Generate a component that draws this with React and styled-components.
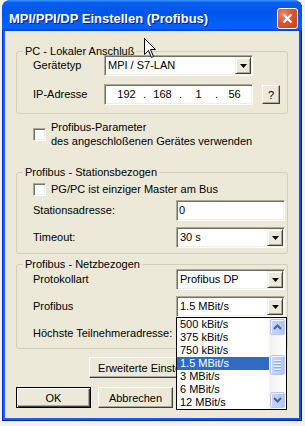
import React from 'react';
import styled, { createGlobalStyle } from 'styled-components';

const Global = createGlobalStyle`
  html, body { margin: 0; padding: 0; background: #f2f2ef; }
  body { font-family: "Liberation Sans", Arial, sans-serif; font-size: 11px; color: #000; }
  #root { width: 305px; height: 426px; overflow: hidden; }
  * { box-sizing: border-box; }
`;

const Screen = styled.div`
  position: relative;
  width: 305px;
  height: 426px;
  padding-left: 2px;
  overflow: hidden;
`;

const Window = styled.div`
  width: 300px;
  height: 421px;
  display: flex;
  flex-direction: column;
  background: linear-gradient(90deg, #0019cf 0, #0b53e6 1px, #1b63f0 2px, #0b53e6 100%);
  border-radius: 8px 8px 0 0;
  overflow: hidden;
  box-shadow: inset -1px -1px 0 #001ea0;
`;

const TitleBar = styled.div`
  height: 31px;
  flex: none;
  display: flex;
  align-items: center;
  padding: 5px 4px 0 7px;
  border-radius: 8px 8px 0 0;
  background: linear-gradient(180deg, #3d95ff 0%, #0a5ff0 8%, #0055ea 40%, #0063fb 86%, #005bf5 93%, #0049db 97%, #003dd7 100%);
`;

const Title = styled.div`
  flex: 1;
  color: #fff;
  font-family: "Liberation Sans", Arial, sans-serif;
  font-weight: bold;
  font-size: 13px;
  text-shadow: 1px 1px 0 #0a1882;
`;

const CloseButton = styled.div`
  width: 21px;
  height: 21px;
  border: 1px solid #fff;
  border-radius: 3px;
  background: radial-gradient(circle at 30% 30%, #f08a6c 0%, #e0522e 45%, #c8401c 100%);
  display: flex;
  align-items: center;
  justify-content: center;
`;

const Body = styled.div`
  position: relative;
  flex: 1;
  margin: 0 3px 3px;
  background: #ece9d8;
  padding: 14px 11px 10px;
  display: flex;
  flex-direction: column;
`;

const Group = styled.fieldset`
  margin: ${p => p.$mt}px 0 0;
  padding: 0;
  min-width: 0;
  border: 1px solid #d0d0bf;
  border-radius: 3px;
`;

const Legend = styled.legend`
  margin-left: 6px;
  padding: 0 2px;
  line-height: 13px;
  font-size: 11px;
  color: #000;
`;

const GroupBody = styled.div`
  display: flex;
  flex-direction: column;
  margin-top: ${p => p.$mt}px;
  padding: 0 0 ${p => p.$pb}px 16px;
  gap: ${p => p.$gap}px;
`;

const Row = styled.div`
  display: flex;
  align-items: center;
  height: 21px;
  margin-bottom: ${p => p.$mb || 0}px;
`;

const Label = styled.div`
  width: ${p => p.$w}px;
  flex: none;
  line-height: 13px;
`;

const Field = styled.div`
  width: ${p => p.$w}px;
  height: 21px;
  flex: none;
  background: #fff;
  border: 1px solid;
  border-color: #aca899 #fff #fff #aca899;
  box-shadow: inset 1px 1px 0 #716f64, inset -1px -1px 0 #f1efe2;
  padding: 1px;
  display: flex;
  align-items: center;
`;

const FieldText = styled.div`
  flex: 1;
  padding-left: ${p => p.$pl ?? 2}px;
  line-height: 13px;
  white-space: nowrap;
  overflow: hidden;
`;

const DropButton = styled.div`
  width: 16px;
  height: 17px;
  flex: none;
  background: #ece9d8;
  border: 1px solid;
  border-color: #f1efe2 #404040 #404040 #f1efe2;
  box-shadow: inset 1px 1px 0 #fff, inset -1px -1px 0 #aca899;
  display: flex;
  align-items: center;
  justify-content: center;
`;

const IpGrid = styled.div`
  display: flex;
  padding-left: 7px;
  line-height: 13px;
`;

const Octet = styled.span`
  width: 27px;
  text-align: center;
`;

const Dot = styled.span`
  width: 9px;
  text-align: center;
`;

const SmallButton = styled.div`
  margin-left: 9px;
  width: 18px;
  height: 19px;
  background: #ece9d8;
  border: 1px solid;
  border-color: #fff #404040 #404040 #fff;
  box-shadow: inset -1px -1px 0 #aca899;
  display: flex;
  align-items: center;
  justify-content: center;
  font-size: 11px;
`;

const CheckRow = styled.div`
  display: flex;
  align-items: center;
  margin-top: ${p => p.$mt || 0}px;
  padding-left: ${p => p.$pl || 0}px;
  height: ${p => p.$h}px;
`;

const Check = styled.div`
  width: 13px;
  height: 13px;
  flex: none;
  background: #fff;
  border: 1px solid;
  border-color: #aca899 #fff #fff #aca899;
  box-shadow: inset 1px 1px 0 #716f64, inset -1px -1px 0 #f1efe2;
  margin-right: 5px;
`;

const CheckText = styled.div`
  line-height: ${p => p.$lh}px;
`;

const ButtonRow = styled.div`
  display: flex;
  gap: 7px;
  margin-top: ${p => p.$mt}px;
  padding-left: ${p => p.$pl || 0}px;
`;

const Button = styled.div`
  width: ${p => p.$w || 75}px;
  height: 21px;
  flex: none;
  background: #ece9d8;
  border: 1px solid;
  border-color: ${p => (p.$default ? '#000' : '#fff #404040 #404040 #fff')};
  box-shadow: ${p =>
    p.$default
      ? 'inset 1px 1px 0 #fff, inset -1px -1px 0 #404040, inset -2px -2px 0 #aca899'
      : 'inset -1px -1px 0 #aca899'};
  display: flex;
  align-items: center;
  justify-content: center;
  white-space: nowrap;
  overflow: hidden;
`;

const Popup = styled.div`
  position: absolute;
  left: 171px;
  top: 286px;
  width: 111px;
  height: 93px;
  border: 1px solid #000;
  background: #fff;
  display: flex;
`;

const List = styled.div`
  flex: 1;
  display: flex;
  flex-direction: column;
`;

const Item = styled.div`
  height: 13px;
  line-height: 13px;
  padding-left: 3px;
  white-space: nowrap;
  background: ${p => (p.$sel ? '#316ac5' : 'transparent')};
  color: ${p => (p.$sel ? '#fff' : '#000')};
`;

const ScrollBar = styled.div`
  width: 17px;
  flex: none;
  padding: 1px 1px 0 1px;
  background: linear-gradient(90deg, #f3f1ec, #fefefb);
  display: flex;
  flex-direction: column;
`;

const ScrollBtn = styled.div`
  height: ${p => p.$h}px;
  margin-top: ${p => p.$mt || 0}px;
  border: 1px solid #b4c8f6;
  border-radius: 2px;
  background: linear-gradient(90deg, #c6d6fc, #bccffb 50%, #b0c5f8);
  box-shadow: inset 1px 1px 0 #eef3fe;
  display: flex;
  align-items: center;
  justify-content: center;
  flex-direction: column;
  gap: 1px;
`;

const Grip = styled.div`
  width: 7px;
  height: 1px;
  background: #eef3fe;
  box-shadow: 0 1px 0 #8caef2;
  margin-bottom: 1px;
`;

const Cursor = styled.svg`
  position: absolute;
  left: 144px;
  top: 38px;
`;

const Arrow = () => (
  <svg width="7" height="4" viewBox="0 0 7 4"><polygon points="0,0 7,0 3.5,4" fill="#000" /></svg>
);

const Chevron = ({ up }) => (
  <svg width="9" height="6" viewBox="0 0 9 6">
    <polyline
      points={up ? '1,5 4.5,1.5 8,5' : '1,1 4.5,4.5 8,1'}
      fill="none"
      stroke="#4d6185"
      strokeWidth="2"
    />
  </svg>
);

const items = ['500 kBit/s', '375 kBit/s', '750 kBit/s', '1.5 MBit/s', '3 MBit/s', '6 MBit/s', '12 MBit/s'];

export default function App() {
  return (
    <Screen>
      <Global />
      <Window>
        <TitleBar>
          <Title>MPI/PPI/DP Einstellen (Profibus)</Title>
          <CloseButton>
            <svg width="11" height="11" viewBox="0 0 11 11">
              <path d="M1.5 1.5 L9.5 9.5 M9.5 1.5 L1.5 9.5" stroke="#fff" strokeWidth="2.2" />
            </svg>
          </CloseButton>
        </TitleBar>
        <Body>
          <Group $mt={0}>
            <Legend>PC - Lokaler Anschluß</Legend>
            <GroupBody $mt={-3} $pb={8} $gap={8}>
              <Row>
                <Label $w={71}>Gerätetyp</Label>
                <Field $w={149}>
                  <FieldText>MPI / S7-LAN</FieldText>
                  <DropButton><Arrow /></DropButton>
                </Field>
              </Row>
              <Row>
                <Label $w={71}>IP-Adresse</Label>
                <Field $w={149}>
                  <IpGrid>
                    <Octet>192</Octet><Dot>.</Dot>
                    <Octet>168</Octet><Dot>.</Dot>
                    <Octet>1</Octet><Dot>.</Dot>
                    <Octet>56</Octet>
                  </IpGrid>
                </Field>
                <SmallButton>?</SmallButton>
              </Row>
            </GroupBody>
          </Group>

          <CheckRow $mt={6} $pl={17} $h={28}>
            <Check />
            <CheckText $lh={14}>
              Profibus-Parameter<br />des angeschloßenen Gerätes verwenden
            </CheckText>
          </CheckRow>

          <Group $mt={18}>
            <Legend>Profibus - Stationsbezogen</Legend>
            <GroupBody $mt={4} $pb={5} $gap={4}>
              <CheckRow $h={13}>
                <Check />
                <CheckText $lh={13}>PG/PC ist einziger Master am Bus</CheckText>
              </CheckRow>
              <Row $mb={2}>
                <Label $w={143}>Stationsadresse:</Label>
                <Field $w={109}>
                  <FieldText $pl={1}>0</FieldText>
                </Field>
              </Row>
              <Row>
                <Label $w={143}>Timeout:</Label>
                <Field $w={109}>
                  <FieldText>30 s</FieldText>
                  <DropButton><Arrow /></DropButton>
                </Field>
              </Row>
            </GroupBody>
          </Group>

          <Group $mt={4}>
            <Legend>Profibus - Netzbezogen</Legend>
            <GroupBody $mt={-2} $pb={4} $gap={6}>
              <Row>
                <Label $w={143}>Protokollart</Label>
                <Field $w={109}>
                  <FieldText>Profibus DP</FieldText>
                  <DropButton><Arrow /></DropButton>
                </Field>
              </Row>
              <Row>
                <Label $w={143}>Profibus</Label>
                <Field $w={109}>
                  <FieldText>1.5 MBit/s</FieldText>
                  <DropButton><Arrow /></DropButton>
                </Field>
              </Row>
              <Row>
                <Label $w={143}>Höchste Teilnehmeradresse:</Label>
                <Field $w={109}>
                  <FieldText />
                  <DropButton><Arrow /></DropButton>
                </Field>
              </Row>
            </GroupBody>
          </Group>

          <ButtonRow $mt={8} $pl={73}>
            <Button $w={146}>Erweiterte Einstellungen...</Button>
          </ButtonRow>
          <ButtonRow $mt={9}>
            <Button $default>OK</Button>
            <Button>Abbrechen</Button>
            <Button />
          </ButtonRow>

          <Popup>
            <List>
              {items.map((t, i) => (
                <Item key={t} $sel={i === 3}>{t}</Item>
              ))}
            </List>
            <ScrollBar>
              <ScrollBtn $h={16}><Chevron up /></ScrollBtn>
              <ScrollBtn $h={20} $mt={20}>
                <Grip /><Grip /><Grip /><Grip />
              </ScrollBtn>
              <ScrollBtn $h={16} $mt={17}><Chevron /></ScrollBtn>
            </ScrollBar>
          </Popup>
        </Body>
      </Window>
      <Cursor width="13" height="21" viewBox="0 0 13 21">
        <polygon
          points="0.5,0.5 0.5,16.5 4.5,12.5 7.5,19.5 9.5,18.5 6.5,11.5 11.5,11.5"
          fill="#fff"
          stroke="#000"
          strokeWidth="1"
        />
      </Cursor>
    </Screen>
  );
}
